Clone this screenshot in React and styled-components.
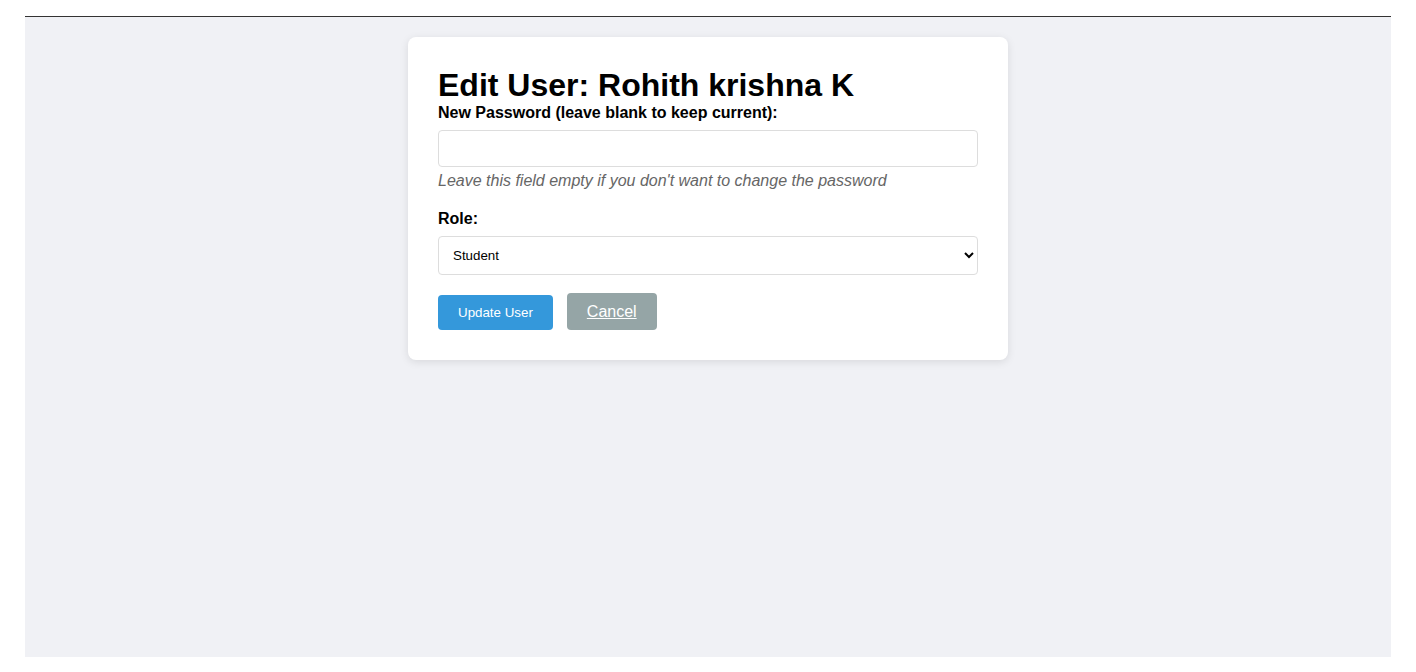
import React from "react";
import styled, { createGlobalStyle } from "styled-components";

const GlobalStyle = createGlobalStyle`
  html, body { margin: 0; padding: 0; background: #ffffff; }
  body { font-family: "Liberation Sans", Arial, sans-serif; }
  * { box-sizing: border-box; }
`;

const Page = styled.div`
  padding: 16px 25px 15px;
`;

const Main = styled.main`
  border-top: 1px solid #333333;
  background: #f0f1f5;
  height: 641px;
  padding-top: 20px;
  display: flex;
  justify-content: center;
  align-items: flex-start;
`;

const Card = styled.div`
  width: 600px;
  background: #ffffff;
  border-radius: 8px;
  box-shadow: 0 2px 8px rgba(0, 0, 0, 0.1);
  padding: 30px;
`;

const Title = styled.h2`
  margin: 0;
  font-size: 32px;
  font-weight: bold;
  line-height: 37px;
  color: #000;
`;

const Group = styled.div`
  margin-bottom: ${(p) => p.$spacing ?? 20}px;
`;

const Label = styled.label`
  display: block;
  font-size: 16px;
  line-height: 18px;
  font-weight: bold;
  color: #000;
  margin-bottom: 8px;
`;

const TextInput = styled.input`
  display: block;
  width: 100%;
  height: 37px;
  padding: 10px;
  border: 1px solid #dddddd;
  border-radius: 4px;
  font-family: "Liberation Sans", Arial, sans-serif;
  font-size: 13.33px;
  outline: none;
`;

const Help = styled.small`
  display: block;
  margin-top: 5px;
  font-size: 16px;
  line-height: 18px;
  font-style: italic;
  color: #666666;
`;

const Select = styled.select`
  display: block;
  width: 100%;
  height: 39px;
  padding: 10px;
  border: 1px solid #dddddd;
  border-radius: 4px;
  background: #ffffff;
  font-family: "Liberation Sans", Arial, sans-serif;
  font-size: 13.33px;
  color: #000;
`;

const Actions = styled.div`
  display: flex;
  align-items: flex-end;
  gap: 14px;
`;

const PrimaryButton = styled.button`
  height: 35px;
  padding: 0 20px;
  border: none;
  border-radius: 4px;
  background: #3498db;
  color: #ffffff;
  font-family: "Liberation Sans", Arial, sans-serif;
  font-size: 13.33px;
  cursor: pointer;
`;

const LinkButton = styled.a`
  display: inline-block;
  height: 37px;
  padding: 10px 20px 0;
  border-radius: 4px;
  background: #95a5a6;
  color: #ffffff;
  font-size: 16px;
  line-height: 18px;
  text-decoration: underline;
  cursor: pointer;
`;

export default function App() {
  return (
    <>
      <GlobalStyle />
      <Page>
        <Main>
          <Card>
            <Title>Edit User: Rohith krishna K</Title>
            <form onSubmit={(e) => e.preventDefault()}>
              <Group>
                <Label htmlFor="password">New Password (leave blank to keep current):</Label>
                <TextInput id="password" type="password" />
                <Help>Leave this field empty if you don't want to change the password</Help>
              </Group>
              <Group $spacing={18}>
                <Label htmlFor="role">Role:</Label>
                <Select id="role" defaultValue="student">
                  <option value="student">Student</option>
                  <option value="teacher">Teacher</option>
                  <option value="admin">Admin</option>
                </Select>
              </Group>
              <Actions>
                <PrimaryButton type="submit">Update User</PrimaryButton>
                <LinkButton href="#">Cancel</LinkButton>
              </Actions>
            </form>
          </Card>
        </Main>
      </Page>
    </>
  );
}
